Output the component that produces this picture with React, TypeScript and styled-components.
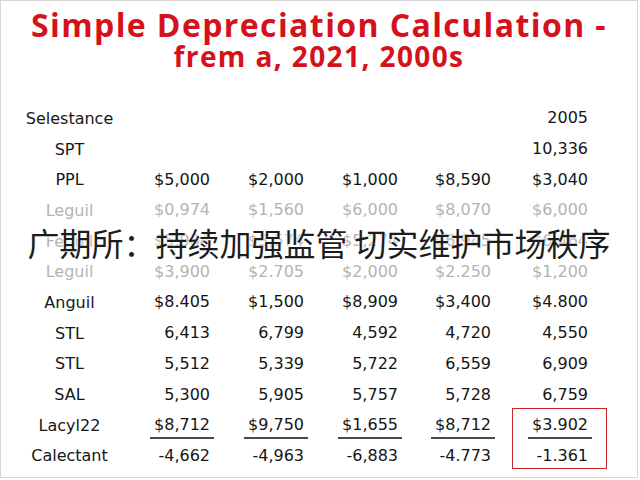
import React from "react";
import styled, { createGlobalStyle } from "styled-components";

const Global = createGlobalStyle`
  html, body { margin: 0; padding: 0; background: #fff; }
  body { width: 640px; height: 480px; overflow: hidden; }
`;

const Frame = styled.div`
  box-sizing: border-box;
  width: 638px;
  height: 478px;
  border: 1px solid #d6d6d6;
  background: #fff;
  display: flex;
  flex-direction: column;
`;

const Title = styled.h1`
  margin: 0;
  padding-top: 9px;
  display: flex;
  flex-direction: column;
  align-items: center;
  font-family: "Open Sans", Lato, sans-serif;
  font-weight: 700;
  color: #d5121b;
`;

const TitleLine = styled.span<{ $size: number; $lh: number }>`
  font-size: ${(p) => p.$size}px;
  line-height: ${(p) => p.$lh}px;
  letter-spacing: 1.4px;
`;

const Table = styled.div`
  margin-top: 31px;
  display: grid;
  grid-template-columns: 137px 76px 94px 94px 93px 97px 1fr;
  grid-auto-rows: 30.7px;
  font-family: "DejaVu Sans", "Open Sans", sans-serif;
  font-size: 16px;
`;

const Label = styled.div<{ $muted?: boolean; $row: number }>`
  grid-column: 1;
  grid-row: ${(p) => p.$row};
  display: flex;
  align-items: center;
  justify-content: center;
  color: ${(p) => (p.$muted ? "#b4b4b4" : "#161616")};
`;

const Cell = styled.div<{ $muted?: boolean; $row: number; $col: number }>`
  grid-column: ${(p) => p.$col};
  grid-row: ${(p) => p.$row};
  display: flex;
  align-items: center;
  justify-content: flex-end;
  color: ${(p) => (p.$muted ? "#b4b4b4" : "#161616")};
`;

const Value = styled.span<{ $under?: boolean }>`
  display: inline-block;
  padding: 0 4px ${(p) => (p.$under ? "2px" : "0")};
  line-height: 20px;
  margin-top: ${(p) => (p.$under ? "4px" : "0")};
  border-bottom: ${(p) => (p.$under ? "2px solid #4a4a4a" : "none")};
`;

const Highlight = styled.div`
  grid-column: 6;
  grid-row: 11 / span 2;
  margin: -2px -15px 2px 17px;
  border: 1.5px solid #c9252c;
  box-sizing: border-box;
`;

const Caption = styled.div`
  grid-column: 1 / -1;
  grid-row: 5;
  justify-self: center;
  align-self: center;
  margin-top: 2px;
  font-family: "Noto Sans CJK SC", "Noto Sans", sans-serif;
  font-size: 32px;
  line-height: 36px;
  color: #1c1c1c;
  white-space: pre;
  text-shadow: 0 0 2px #fff, 0 0 3px #fff;
`;

type Row = { label: string; values: string[]; muted?: boolean; under?: boolean };

const rows: Row[] = [
  { label: "Selestance", values: ["", "", "", "", "2005"] },
  { label: "SPT", values: ["", "", "", "", "10,336"] },
  { label: "PPL", values: ["$5,000", "$2,000", "$1,000", "$8,590", "$3,040"] },
  { label: "Leguil", values: ["$0,974", "$1,560", "$6,000", "$8,070", "$6,000"], muted: true },
  { label: "Fegull", values: ["$5,904", "$3,574", "$5,274", "$6,945", "$6,464"], muted: true },
  { label: "Leguil", values: ["$3,900", "$2.705", "$2,000", "$2.250", "$1,200"], muted: true },
  { label: "Anguil", values: ["$8.405", "$1,500", "$8,909", "$3,400", "$4.800"] },
  { label: "STL", values: ["6,413", "6,799", "4,592", "4,720", "4,550"] },
  { label: "STL", values: ["5,512", "5,339", "5,722", "6,559", "6,909"] },
  { label: "SAL", values: ["5,300", "5,905", "5,757", "5,728", "6,759"] },
  { label: "Lacyl22", values: ["$8,712", "$9,750", "$1,655", "$8,712", "$3.902"], under: true },
  { label: "Calectant", values: ["-4,662", "-4,963", "-6,883", "-4.773", "-1.361"] },
];

export default function App() {
  return (
    <>
      <Global />
      <Frame>
        <Title>
          <TitleLine $size={32} $lh={30}>
            Simple Depreciation Calculation -
          </TitleLine>
          <TitleLine $size={28} $lh={32}>
            frem a, 2021, 2000s
          </TitleLine>
        </Title>
        <Table>
          {rows.map((r, i) => (
            <React.Fragment key={i}>
              <Label $muted={r.muted} $row={i + 1}>
                {r.label}
              </Label>
              {r.values.map((v, j) => (
                <Cell key={j} $muted={r.muted} $row={i + 1} $col={j + 2}>
                  {v && <Value $under={r.under}>{v}</Value>}
                </Cell>
              ))}
            </React.Fragment>
          ))}
          <Highlight />
          <Caption>广期所：持续加强监管 切实维护市场秩序</Caption>
        </Table>
      </Frame>
    </>
  );
}
